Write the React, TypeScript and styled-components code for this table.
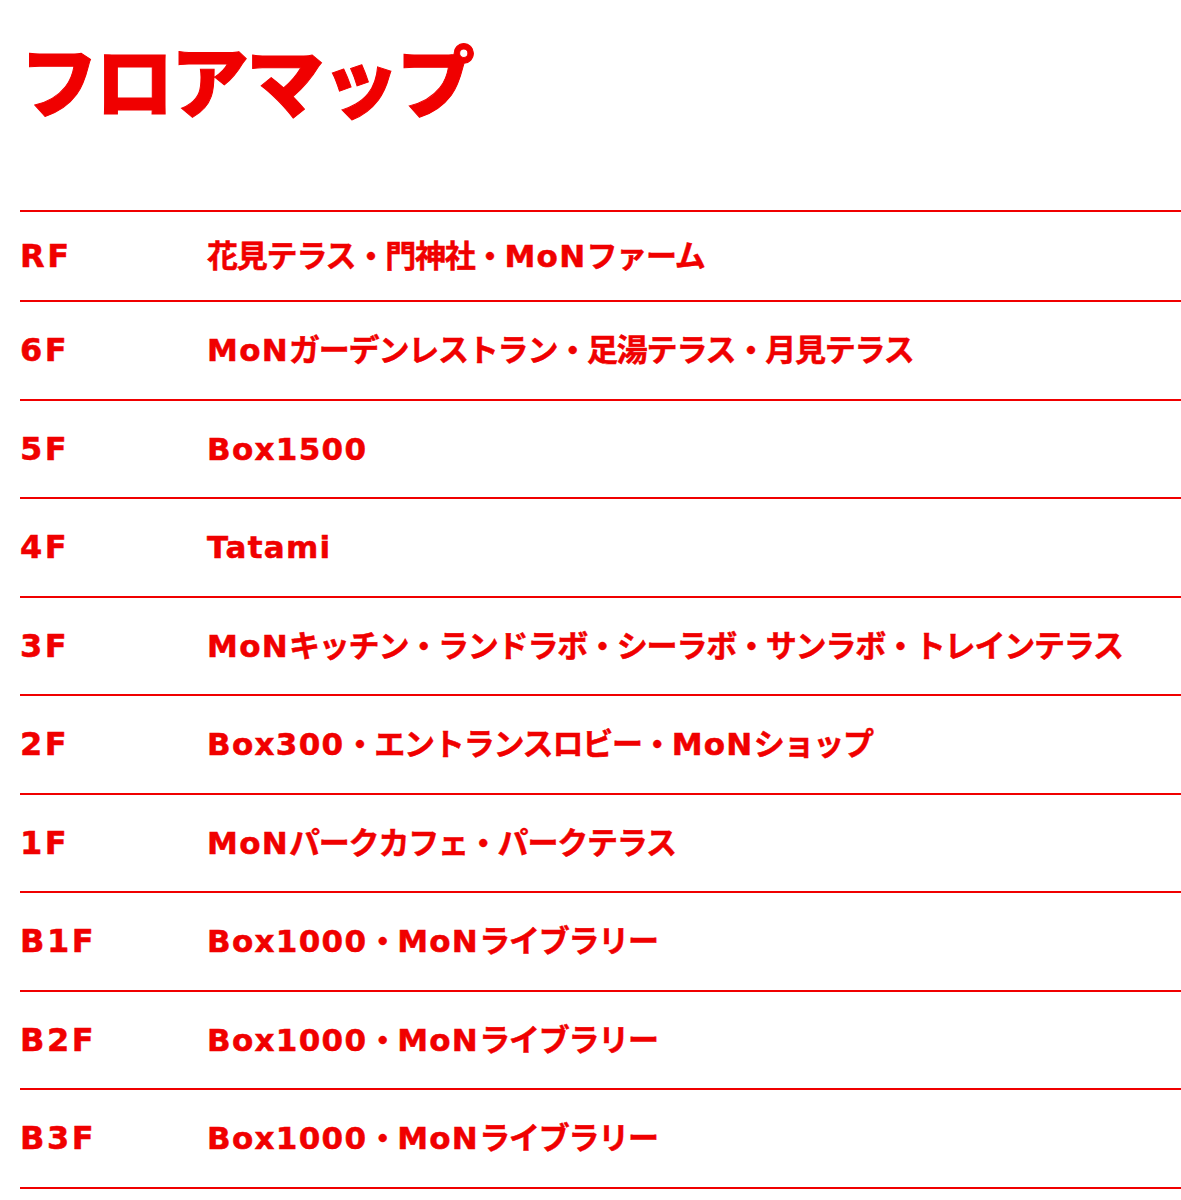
import styled, { createGlobalStyle } from 'styled-components'

const RED = '#f00000'

const GlobalStyle = createGlobalStyle`
    html, body {
        margin: 0;
        padding: 0;
        background: #ffffff;
    }
    body {
        font-family: "DejaVu Sans", "Noto Sans CJK JP", sans-serif;
        color: ${RED};
    }
`

const Page = styled.main`
    padding: 39px 0 0 20px;
`

const Title = styled.h1`
    margin: 0 0 93px 0;
    font-family: "Noto Sans CJK JP", sans-serif;
    font-size: 78px;
    font-weight: 900;
    line-height: 78px;
    letter-spacing: -2.6px;
    -webkit-text-stroke: 1px ${RED};
`

const FloorList = styled.ul`
    list-style: none;
    margin: 0;
    padding: 0;
    border-top: 2px solid ${RED};
`

const FloorRow = styled.li<{ $first?: boolean }>`
    display: grid;
    grid-template-columns: 187px 1fr;
    align-content: center;
    align-items: baseline;
    height: ${(props) => props.$first ? '88px' : '96.5px'};
    border-bottom: 2px solid ${RED};
    font-size: 31px;
    font-weight: 700;
    line-height: 40px;
    white-space: nowrap;
    -webkit-text-stroke: 0.5px ${RED};
`

const FloorName = styled.span`
    font-size: 32px;
    letter-spacing: 2.6px;
`

const Places = styled.span`
    letter-spacing: -1.2px;
`

// latin runs in the reference font are noticeably wider than the kana
const Latin = styled.span`
    letter-spacing: 1.3px;
`

const floors = [
    { name: 'RF', places: '花見テラス・門神社・MoNファーム' },
    { name: '6F', places: 'MoNガーデンレストラン・足湯テラス・月見テラス' },
    { name: '5F', places: 'Box1500' },
    { name: '4F', places: 'Tatami' },
    { name: '3F', places: 'MoNキッチン・ランドラボ・シーラボ・サンラボ・トレインテラス' },
    { name: '2F', places: 'Box300・エントランスロビー・MoNショップ' },
    { name: '1F', places: 'MoNパークカフェ・パークテラス' },
    { name: 'B1F', places: 'Box1000・MoNライブラリー' },
    { name: 'B2F', places: 'Box1000・MoNライブラリー' },
    { name: 'B3F', places: 'Box1000・MoNライブラリー' },
]

function PlaceText({ text }: { text: string }) {
    const parts = text.split(/([A-Za-z0-9]+)/).filter(Boolean)
    return (
        <Places>
            {parts.map((part, i) =>
                /^[A-Za-z0-9]+$/.test(part)
                    ? <Latin key={i}>{part}</Latin>
                    : <span key={i}>{part}</span>
            )}
        </Places>
    )
}

export default function App() {
    return (
        <>
            <GlobalStyle />
            <Page>
                <Title>フロアマップ</Title>
                <FloorList>
                    {floors.map((floor, i) => (
                        <FloorRow key={floor.name} $first={i === 0}>
                            <FloorName>{floor.name}</FloorName>
                            <PlaceText text={floor.places} />
                        </FloorRow>
                    ))}
                </FloorList>
            </Page>
        </>
    )
}
